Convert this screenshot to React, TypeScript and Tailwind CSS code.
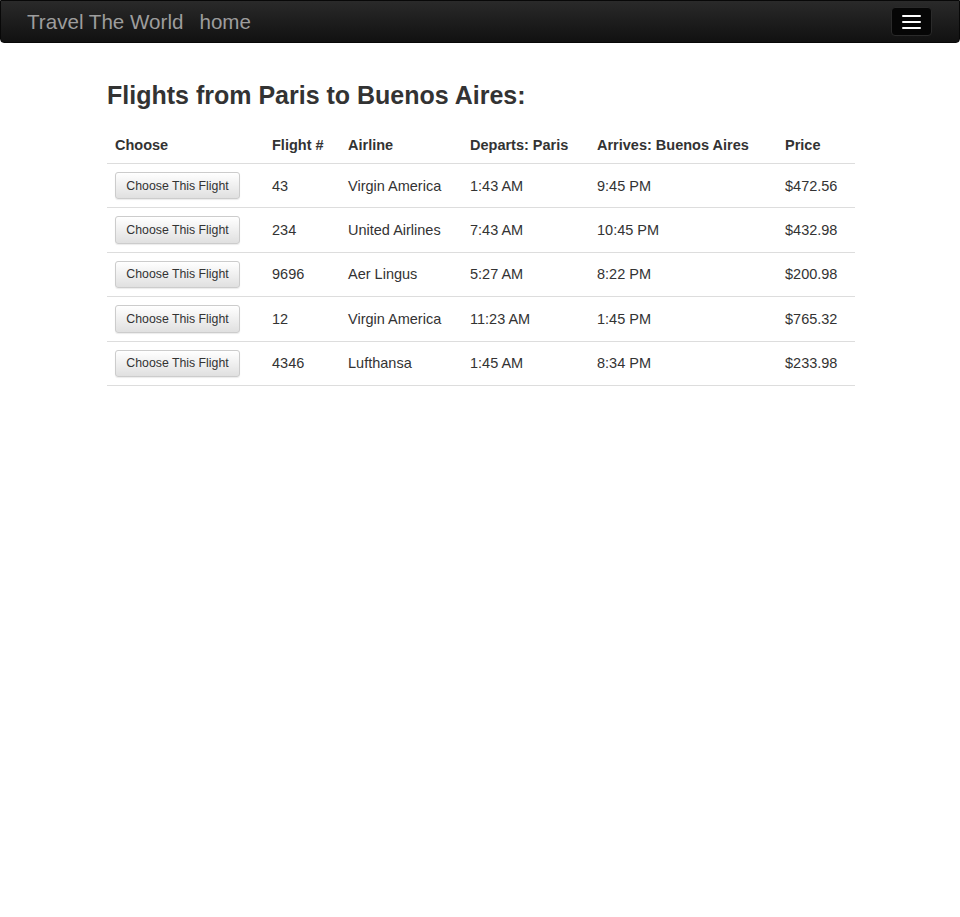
const flights = [
  { num: '43', airline: 'Virgin America', departs: '1:43 AM', arrives: '9:45 PM', price: '$472.56' },
  { num: '234', airline: 'United Airlines', departs: '7:43 AM', arrives: '10:45 PM', price: '$432.98' },
  { num: '9696', airline: 'Aer Lingus', departs: '5:27 AM', arrives: '8:22 PM', price: '$200.98' },
  { num: '12', airline: 'Virgin America', departs: '11:23 AM', arrives: '1:45 PM', price: '$765.32' },
  { num: '4346', airline: 'Lufthansa', departs: '1:45 AM', arrives: '8:34 PM', price: '$233.98' },
];

export default function App(): React.ReactElement {
  return (
    <div className="min-h-[917px] bg-white font-['Liberation_Sans',Arial,sans-serif] text-[14.5px] leading-[20px] text-[#333]">
      <nav className="flex h-[43px] items-center justify-between rounded-b-[4px] border border-[#080808] bg-gradient-to-b from-[#2a2a2a] to-[#111] pr-[27px] pl-[26px]">
        <div className="flex items-center gap-[16px] text-[20.6px] text-[#9d9d9d]">
          <span>Travel The World</span>
          <span>home</span>
        </div>
        <button className="flex h-[29px] w-[41px] flex-col items-center justify-center gap-[4px] rounded-[4px] border border-[#2a2a2a] bg-[#060606]">
          <span className="block h-[2px] w-[19px] rounded-[1px] bg-white" />
          <span className="block h-[2px] w-[19px] rounded-[1px] bg-white" />
          <span className="block h-[2px] w-[19px] rounded-[1px] bg-white" />
        </button>
      </nav>

      <div className="mx-auto w-[750px] pl-[2px]">
        <h2 className="mt-[38px] mb-[18px] text-[25px] leading-[28px] font-bold">
          Flights from Paris to Buenos Aires:
        </h2>
        <table className="w-full border-collapse">
          <thead>
            <tr className="border-b border-[#ddd] text-left font-bold">
              <th className="w-[157px] px-[8px] py-[8px]">Choose</th>
              <th className="w-[76px] px-[8px] py-[8px]">Flight #</th>
              <th className="w-[122px] px-[8px] py-[8px]">Airline</th>
              <th className="w-[127px] px-[8px] py-[8px]">Departs: Paris</th>
              <th className="w-[188px] px-[8px] py-[8px]">Arrives: Buenos Aires</th>
              <th className="px-[8px] py-[8px]">Price</th>
            </tr>
          </thead>
          <tbody>
            {flights.map((f) => (
              <tr key={f.num} className="border-b border-[#ddd]">
                <td className="px-[8px] py-[8px]">
                  <button className="h-[27.4px] w-[125px] rounded-[3px] border border-[#ccc] bg-gradient-to-b from-white to-[#e0e0e0] text-[12.3px] leading-[18px] text-[#333] shadow-[0_1px_1px_rgba(0,0,0,0.08)]">
                    Choose This Flight
                  </button>
                </td>
                <td className="px-[8px] py-[8px]">{f.num}</td>
                <td className="px-[8px] py-[8px]">{f.airline}</td>
                <td className="px-[8px] py-[8px]">{f.departs}</td>
                <td className="px-[8px] py-[8px]">{f.arrives}</td>
                <td className="px-[8px] py-[8px]">{f.price}</td>
              </tr>
            ))}
          </tbody>
        </table>
      </div>
    </div>
  );
}
